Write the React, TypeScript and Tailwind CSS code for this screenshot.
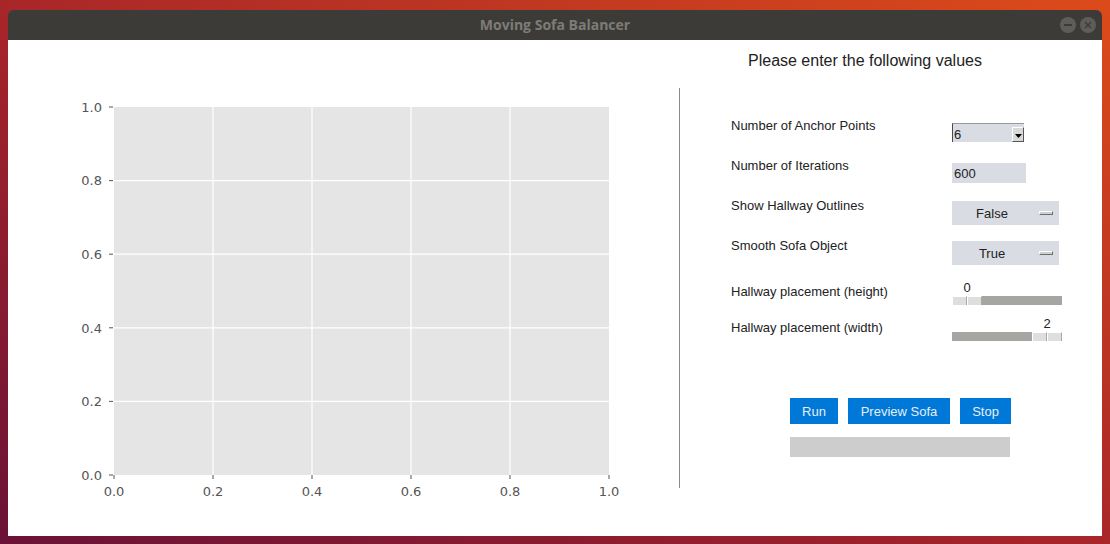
import React from "react";

const xTicks = [0, 0.2, 0.4, 0.6, 0.8, 1.0];
const AX = { x: 106, y: 67, w: 495, h: 368 };

function Plot() {
  return (
    <svg width={671} height={496} className="block">
      <rect x={AX.x} y={AX.y} width={AX.w} height={AX.h} fill="#e5e5e5" />
      {xTicks.map((t, i) => {
        const x = AX.x + t * AX.w;
        const y = AX.y + AX.h - t * AX.h;
        return (
          <g key={i}>
            {i > 0 && i < 5 && (
              <line x1={x} x2={x} y1={AX.y} y2={AX.y + AX.h} stroke="#ffffff" strokeWidth={1.2} />
            )}
            {i > 0 && i < 5 && (
              <line x1={AX.x} x2={AX.x + AX.w} y1={y} y2={y} stroke="#ffffff" strokeWidth={1.2} />
            )}
            <line x1={x} x2={x} y1={AX.y + AX.h} y2={AX.y + AX.h + 4} stroke="#555" strokeWidth={1} />
            <line x1={AX.x - 5} x2={AX.x - 1} y1={y} y2={y} stroke="#555" strokeWidth={1} />
            <text
              x={x}
              y={456}
              textAnchor="middle"
              fontFamily="'DejaVu Sans', sans-serif"
              fontSize={13}
              fill="#555"
            >
              {t.toFixed(1)}
            </text>
            <text
              x={94}
              y={y + 4.7}
              textAnchor="end"
              fontFamily="'DejaVu Sans', sans-serif"
              fontSize={13}
              fill="#555"
            >
              {t.toFixed(1)}
            </text>
          </g>
        );
      })}
    </svg>
  );
}

function Option({ value }: { value: string }) {
  return (
    <div className="mt-[3px] w-[107px] h-[24px] bg-[#d9dde3] flex items-center">
      <div className="w-[80px] text-center pt-[1px]">{value}</div>
      <div className="ml-[7px] w-[14px] h-[4px] bg-[#cfcfcf] border-t border-l border-t-white border-l-white border-b border-r border-b-[#6e6e6e] border-r-[#6e6e6e]" />
    </div>
  );
}

function Handle() {
  return (
    <div className="h-full w-[30px] flex">
      <div className="w-[15px] h-full bg-[#dedede] border-t border-l border-t-white border-l-white border-r border-r-[#a8a8a8]" />
      <div className="w-[15px] h-full bg-[#dedede] border-t border-l border-t-white border-l-white border-r border-r-[#a8a8a8]" />
    </div>
  );
}

function Slider({ value, atEnd }: { value: string; atEnd: boolean }) {
  return (
    <div className="w-[110px] flex flex-col">
      <div className={`h-[16px] flex ${atEnd ? "justify-end" : "justify-start"}`}>
        <div className="w-[30px] text-center">{value}</div>
      </div>
      <div className={`h-[9px] bg-[#a5a5a2] flex ${atEnd ? "justify-end" : "justify-start"}`}>
        <Handle />
      </div>
    </div>
  );
}

export default function App() {
  return (
    <div className="w-[1110px] h-[544px] overflow-hidden bg-[linear-gradient(to_top_right,#6a1237_0%,#a3232a_45%,#dc4b1a_100%)] pt-[10px] pl-[8px]">
      <div className="w-[1094px] flex flex-col">
        <div className="h-[30px] bg-[#3c3b37] rounded-t-[6px] grid grid-cols-[1fr_auto_1fr] items-center">
          <div />
          <div className="font-['Open_Sans',sans-serif] font-bold text-[14px] text-[#7e7c77] leading-[18px]">
            Moving Sofa Balancer
          </div>
          <div className="flex justify-end gap-[4px] pr-[6px]">
            <div className="w-[16px] h-[16px] rounded-full bg-[#5e5d59] flex items-center justify-center">
              <div className="w-[8px] h-[1.5px] bg-[#3c3b37]" />
            </div>
            <div className="w-[16px] h-[16px] rounded-full bg-[#5e5d59] flex items-center justify-center">
              <svg width="8" height="8" viewBox="0 0 8 8">
                <path d="M1 1L7 7M7 1L1 7" stroke="#3c3b37" strokeWidth="1.4" />
              </svg>
            </div>
          </div>
        </div>
        <div className="h-[496px] bg-white flex">
          <div className="w-[671px] h-full">
            <Plot />
          </div>
          <div className="w-px h-[400px] mt-[48px] bg-[#8a8a8a]" />
          <div className="flex-1 flex flex-col font-['Liberation_Sans',Arial,sans-serif] text-[#222] text-[13px] leading-[15px]">
            <div className="pl-[68px] pt-[12px] text-[16px] leading-[18px]">Please enter the following values</div>

            <div className="pl-[51px] flex h-[39px] mt-[49px]">
              <div className="w-[221px] -mt-[1px]">Number of Anchor Points</div>
              <div className="mt-[4px] w-[72px] h-[19px] bg-[#d9dde3] border-l border-t border-l-[#4a4a4a] border-t-[#9a9a9a] flex justify-between">
                <div className="pl-[1px] pt-[3px]">6</div>
                <div className="self-end w-[12px] h-[15px] bg-[#d9d9d9] border-t border-l border-t-white border-l-white border-b border-r border-b-[#555] border-r-[#555] flex items-end justify-center pb-[3px]">
                  <svg width="7" height="4" viewBox="0 0 7 4">
                    <path d="M0 0H7L3.5 4Z" fill="#000" />
                  </svg>
                </div>
              </div>
            </div>

            <div className="pl-[51px] flex h-[40px]">
              <div className="w-[221px]">Number of Iterations</div>
              <div className="mt-[5px] w-[74px] h-[20px] bg-[#d9dde3] pl-[2px] pt-[3px]">600</div>
            </div>

            <div className="pl-[51px] flex h-[40px]">
              <div className="w-[221px]">Show Hallway Outlines</div>
              <Option value="False" />
            </div>

            <div className="pl-[51px] flex h-[42px]">
              <div className="w-[221px]">Smooth Sofa Object</div>
              <Option value="True" />
            </div>

            <div className="pl-[51px] flex h-[36px]">
              <div className="w-[221px] mt-[4px]">Hallway placement (height)</div>
              <Slider value="0" atEnd={false} />
            </div>

            <div className="pl-[51px] flex h-[25px]">
              <div className="w-[221px] mt-[4px]">Hallway placement (width)</div>
              <Slider value="2" atEnd={true} />
            </div>

            <div className="pl-[110px] flex gap-[10px] mt-[57px]">
              <button className="w-[48px] h-[26px] bg-[#0078d7] text-[#e6eef8]">Run</button>
              <button className="w-[102px] h-[26px] bg-[#0078d7] text-[#e6eef8]">Preview Sofa</button>
              <button className="w-[51px] h-[26px] bg-[#0078d7] text-[#e6eef8]">Stop</button>
            </div>
            <div className="ml-[110px] mt-[13px] w-[220px] h-[20px] bg-[#cdcdcd]" />
          </div>
        </div>
      </div>
    </div>
  );
}
